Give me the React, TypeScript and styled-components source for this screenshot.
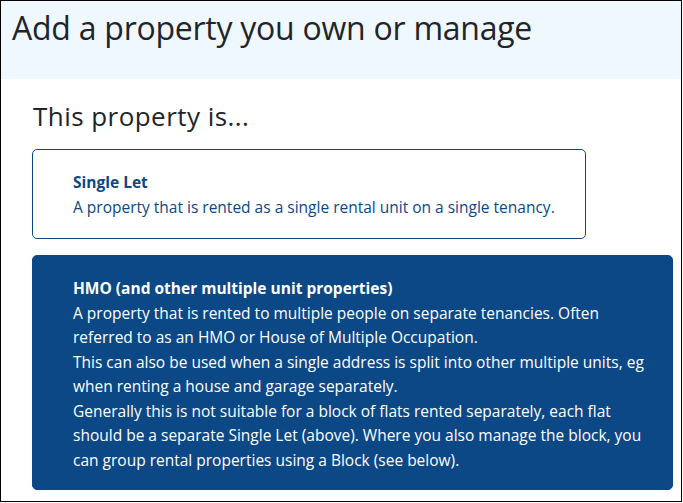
import React from "react";
import styled, { createGlobalStyle } from "styled-components";

const Global = createGlobalStyle`
  html, body { margin: 0; padding: 0; background: #ffffff; }
  body { font-family: "Open Sans", "Noto Sans", sans-serif; }
  * { box-sizing: border-box; }
`;

const Frame = styled.div`
  width: 682px;
  height: 502px;
  border: 1px solid #000000;
  overflow: hidden;
  display: flex;
  flex-direction: column;
  background: #ffffff;
`;

const Header = styled.header`
  flex: 0 0 78px;
  height: 78px;
  background: #f0f8ff;
  padding: 8px 11px 0;
`;

const Title = styled.h1`
  margin: 0;
  font-size: 32px;
  line-height: 38px;
  font-weight: 400;
  color: #212529;
  letter-spacing: -0.25px;
  white-space: nowrap;
`;

const Main = styled.main`
  padding: 22px 8px 0 31px;
  display: flex;
  flex-direction: column;
  align-items: flex-start;
`;

const Subtitle = styled.h2`
  margin: 0 0 17px 1px;
  font-size: 26px;
  line-height: 31px;
  font-weight: 500;
  color: #212529;
  letter-spacing: 0.45px;
  white-space: nowrap;
`;

const Option = styled.div<{ $selected?: boolean; $width: number }>`
  flex-shrink: 0;
  width: ${(p) => p.$width}px;
  border: 1px solid #0b4885;
  border-radius: 5px;
  background: ${(p) => (p.$selected ? "#0b4885" : "#ffffff")};
  color: ${(p) => (p.$selected ? "#ffffff" : "#0b4885")};
  padding: ${(p) => (p.$selected ? "20px 10px 17px 40px" : "20px 10px 19px 40px")};
  margin-bottom: 16px;
  font-size: 15.5px;
  line-height: 24.5px;
  letter-spacing: 0;
`;

const OptionTitle = styled.div`
  font-weight: 700;
  white-space: nowrap;
`;

const OptionText = styled.div`
  font-weight: 400;
  white-space: nowrap;
`;

export default function App() {
  return (
    <>
      <Global />
      <Frame>
        <Header>
          <Title>Add a property you own or manage</Title>
        </Header>
        <Main>
          <Subtitle>This property is...</Subtitle>
          <Option $width={554}>
            <OptionTitle>Single Let</OptionTitle>
            <OptionText>A property that is rented as a single rental unit on a single tenancy.</OptionText>
          </Option>
          <Option $width={641} $selected>
            <OptionTitle>HMO (and other multiple unit properties)</OptionTitle>
            <OptionText>
              A property that is rented to multiple people on separate tenancies. Often
              <br />
              referred to as an HMO or House of Multiple Occupation.
            </OptionText>
            <OptionText>
              This can also be used when a single address is split into other multiple units, eg
              <br />
              when renting a house and garage separately.
            </OptionText>
            <OptionText>
              Generally this is not suitable for a block of flats rented separately, each flat
              <br />
              should be a separate Single Let (above). Where you also manage the block, you
              <br />
              can group rental properties using a Block (see below).
            </OptionText>
          </Option>
        </Main>
      </Frame>
    </>
  );
}
